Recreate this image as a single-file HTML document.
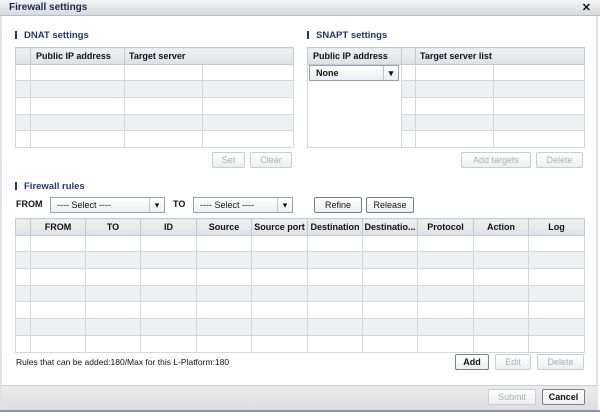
<!DOCTYPE html>
<html><head><meta charset="utf-8"><style>
*{box-sizing:border-box;margin:0;padding:0}
body{width:600px;height:412px;overflow:hidden;background:#fff;font-family:"Liberation Sans",sans-serif;font-size:9px;color:#111;position:relative}
.a{position:absolute}
.title{left:0;top:0;width:600px;height:16px;background:linear-gradient(#f4f5f7,#d6d9de);border-bottom:1px solid #b8bcc4;font-weight:bold;font-size:10px;color:#1a2a4a;padding:2px 0 0 9px}
.x{right:9px;top:1px;font-weight:bold;font-size:11px}
.frame{left:0;top:16px;width:598px;height:396px;border-left:2px solid #dfe2e6;border-right:2px solid #dfe2e6}
.sec{font-weight:bold;color:#1c3a70;font-size:9.5px}
.sec:before{content:"";display:inline-block;width:2px;height:8px;background:#1c3a70;margin-right:7px;vertical-align:-1px}
table{border-collapse:collapse;position:absolute;table-layout:fixed;border:1px solid #b5bac2}
td,th{border:1px solid #d4d7dc;height:16.7px;padding:0;font-size:9px}
th{background:linear-gradient(#eef0f3,#dde1e7);font-weight:bold;text-align:center;border-color:#c5c9d0}
tr:nth-child(odd) td{background:#eef0f4}
tr:nth-child(even) td{background:#fff}
.btn{position:absolute;height:16px;border:1px solid #c9ccd1;border-radius:2px;background:linear-gradient(#fff,#eceef1);text-align:center;line-height:14px;color:#aab0b8;font-size:9px}
.on{border-color:#7b7f86;color:#111;font-weight:bold}
.sel{position:absolute;height:16px;border:1px solid #9aa0a8;background:linear-gradient(#fff,#eceef1);padding-left:6px;line-height:14px;font-size:9px}
.sel:after{content:"▾";position:absolute;right:0;top:0;width:14px;height:14px;border-left:1px solid #c0c4ca;text-align:center;font-size:9px}
</style></head><body>
<div class="a frame"></div>
<div class="a title">Firewall settings</div>
<div class="a x">✕</div>

<div class="a sec" style="left:15px;top:30px">DNAT settings</div>
<table style="left:15px;top:47px;width:278px">
<colgroup><col style="width:15px"><col style="width:94px"><col style="width:78px"><col style="width:91px"></colgroup>
<tr><th style="height:16px"></th><th style="text-align:left;padding-left:5px">Public IP address</th><th colspan="2" style="text-align:left;padding-left:4px">Target server</th></tr>
<tr><td></td><td></td><td></td><td></td></tr>
<tr><td></td><td></td><td></td><td></td></tr>
<tr><td></td><td></td><td></td><td></td></tr>
<tr><td></td><td></td><td></td><td></td></tr>
<tr><td></td><td></td><td></td><td></td></tr>
</table>
<div class="btn" style="left:212px;top:152px;width:33px">Set</div>
<div class="btn" style="left:250px;top:152px;width:42px">Clear</div>

<div class="a sec" style="left:307px;top:30px">SNAPT settings</div>
<table style="left:307px;top:47px;width:277px">
<colgroup><col style="width:94px"><col style="width:14px"><col style="width:78px"><col style="width:91px"></colgroup>
<tr><th style="text-align:left;padding-left:5px;height:16px">Public IP address</th><th></th><th colspan="2" style="text-align:left;padding-left:4px">Target server list</th></tr>
<tr><td rowspan="5" style="background:#fff;vertical-align:top"></td><td style="background:#fff"></td><td style="background:#fff"></td><td style="background:#fff"></td></tr>
<tr><td style="background:#eef0f4"></td><td style="background:#eef0f4"></td><td style="background:#eef0f4"></td></tr>
<tr><td style="background:#fff"></td><td style="background:#fff"></td><td style="background:#fff"></td></tr>
<tr><td style="background:#eef0f4"></td><td style="background:#eef0f4"></td><td style="background:#eef0f4"></td></tr>
<tr><td style="background:#fff"></td><td style="background:#fff"></td><td style="background:#fff"></td></tr>
</table>
<div class="sel" style="left:309px;top:65px;width:90px;font-weight:bold">None</div>
<div class="btn" style="left:461px;top:152px;width:70px">Add targets</div>
<div class="btn" style="left:536px;top:152px;width:47px">Delete</div>

<div class="a sec" style="left:15px;top:181px">Firewall rules</div>
<div class="a" style="left:16px;top:199px;font-weight:bold">FROM</div>
<div class="sel" style="left:50px;top:197px;width:115px">---- Select ----</div>
<div class="a" style="left:173px;top:199px;font-weight:bold">TO</div>
<div class="sel" style="left:193px;top:197px;width:100px">---- Select ----</div>
<div class="btn on" style="left:314px;top:197px;width:48px;font-weight:normal">Refine</div>
<div class="btn on" style="left:366px;top:197px;width:48px;font-weight:normal">Release</div>

<table style="left:15px;top:218px;width:569px">
<colgroup><col style="width:15px"><col style="width:55px"><col style="width:55px"><col style="width:56px"><col style="width:55px"><col style="width:56px"><col style="width:55px"><col style="width:55px"><col style="width:56px"><col style="width:55px"><col style="width:56px"></colgroup>
<tr><th style="height:16px"></th><th>FROM</th><th>TO</th><th>ID</th><th>Source</th><th>Source port</th><th>Destination</th><th>Destinatio...</th><th>Protocol</th><th>Action</th><th>Log</th></tr>
<tr><td></td><td></td><td></td><td></td><td></td><td></td><td></td><td></td><td></td><td></td><td></td></tr>
<tr><td></td><td></td><td></td><td></td><td></td><td></td><td></td><td></td><td></td><td></td><td></td></tr>
<tr><td></td><td></td><td></td><td></td><td></td><td></td><td></td><td></td><td></td><td></td><td></td></tr>
<tr><td></td><td></td><td></td><td></td><td></td><td></td><td></td><td></td><td></td><td></td><td></td></tr>
<tr><td></td><td></td><td></td><td></td><td></td><td></td><td></td><td></td><td></td><td></td><td></td></tr>
<tr><td></td><td></td><td></td><td></td><td></td><td></td><td></td><td></td><td></td><td></td><td></td></tr>
<tr><td></td><td></td><td></td><td></td><td></td><td></td><td></td><td></td><td></td><td></td><td></td></tr>
</table>
<div class="a" style="left:16px;top:357px;font-size:8.5px">Rules that can be added:180/Max for this L-Platform:180</div>
<div class="btn on" style="left:455px;top:354px;width:34px">Add</div>
<div class="btn" style="left:495px;top:354px;width:36px">Edit</div>
<div class="btn" style="left:537px;top:354px;width:47px">Delete</div>

<div class="a" style="left:2px;top:385px;width:596px;height:25px;background:linear-gradient(#ebebeb,#dedede);border-top:1px solid #d0d0d0"></div>
<div class="a" style="left:0;top:410px;width:600px;height:2px;background:#8a96a8"></div>
<div class="btn" style="left:488px;top:389px;width:48px">Submit</div>
<div class="btn on" style="left:542px;top:389px;width:43px">Cancel</div>
</body></html>
